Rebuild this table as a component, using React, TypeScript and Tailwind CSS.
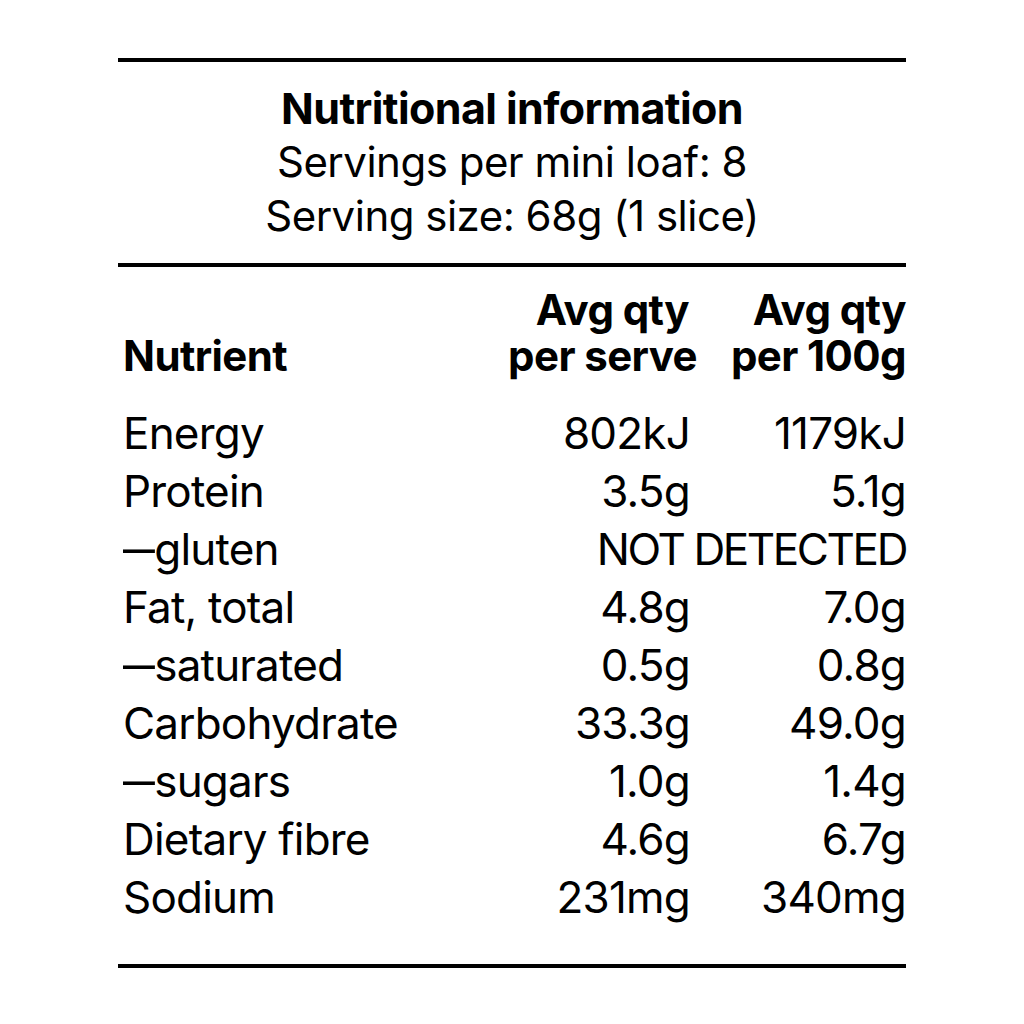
export default function App() {
  const rows: [boolean, string, string, string][] = [
    [false, "Energy", "802kJ", "1179kJ"],
    [false, "Protein", "3.5g", "5.1g"],
    [true, "gluten", "", ""],
    [false, "Fat, total", "4.8g", "7.0g"],
    [true, "saturated", "0.5g", "0.8g"],
    [false, "Carbohydrate", "33.3g", "49.0g"],
    [true, "sugars", "1.0g", "1.4g"],
    [false, "Dietary fibre", "4.6g", "6.7g"],
    [false, "Sodium", "231mg", "340mg"],
  ];
  return (
    <div
      className="min-h-screen bg-white text-black"
      style={{ fontFamily: "Inter, 'Liberation Sans', sans-serif" }}
    >
      <div className="mx-auto w-[788px] pt-[58px]">
        <div className="h-[4px] bg-black" />
        <div className="flex flex-col items-center pt-[19px] pb-[20px]">
          <div className="text-[43px] font-bold leading-[54px] tracking-[-0.6px]">Nutritional information</div>
          <div className="text-[42px] leading-[54px] tracking-[-0.5px]">Servings per mini loaf: 8</div>
          <div className="text-[42px] leading-[54px] tracking-[-0.5px]">Serving size: 68g (1 slice)</div>
        </div>
        <div className="h-[4px] bg-black" />
        <div className="grid grid-cols-[1fr_200px_216px] items-end pt-[20px] text-[42px] font-bold leading-[46px] tracking-[-0.6px]">
          <div className="pl-[5px]">Nutrient</div>
          <div className="mr-[-7px] text-right">
            <div className="pr-[8px]">Avg qty</div>
            <div>per serve</div>
          </div>
          <div className="text-right">
            <div>Avg qty</div>
            <div>per 100g</div>
          </div>
        </div>
        <div className="pt-[25px] pb-[38px] text-[44px] leading-[58px] tracking-[-0.8px]">
          {rows.map(([sub, n, a, b]) => (
            <div key={n} className="grid grid-cols-[1fr_200px_216px]">
              <div className="pl-[5px]">
                {sub && <span className="mr-[10px] inline-block origin-left scale-x-[1.45]">–</span>}
                {n}
              </div>
              {n === "gluten" ? (
                <div className="col-span-2 text-right tracking-[-2.4px]">NOT DETECTED</div>
              ) : (
                <>
                  <div className="text-right">{a}</div>
                  <div className="text-right">{b}</div>
                </>
              )}
            </div>
          ))}
        </div>
        <div className="h-[4px] bg-black" />
      </div>
    </div>
  );
}
